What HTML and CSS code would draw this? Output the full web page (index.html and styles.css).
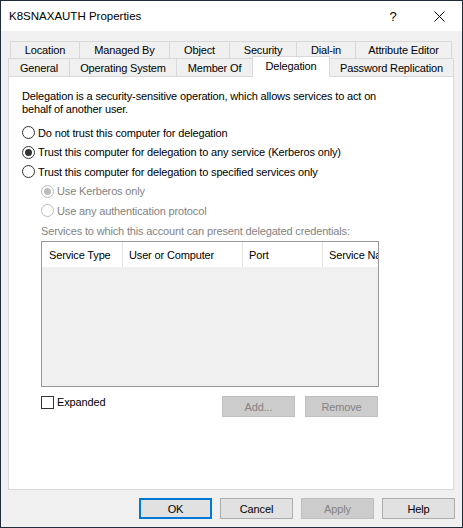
FILE: index.html
```html
<!DOCTYPE html>
<html lang="en">
<head>
<meta charset="utf-8">
<title>K8SNAXAUTH Properties</title>
<link rel="stylesheet" href="styles.css">
</head>
<body>
<div class="window">
  <div class="titlebar">
    <span class="title">K8SNAXAUTH Properties</span>
    <div class="caps">
      <div class="cap cap-help">?</div>
      <div class="cap cap-close">
        <svg width="11" height="11" viewBox="0 0 11 11"><path d="M0.5 0.5 L10.5 10.5 M10.5 0.5 L0.5 10.5" stroke="#000" stroke-width="1" fill="none"/></svg>
      </div>
    </div>
  </div>
  <div class="client">
    <div class="tabs">
      <div class="tab-row back">
        <div class="tab t-location">Location</div>
        <div class="tab t-managed">Managed By</div>
        <div class="tab t-object">Object</div>
        <div class="tab t-security">Security</div>
        <div class="tab t-dialin">Dial-in</div>
        <div class="tab t-attr last">Attribute Editor</div>
      </div>
      <div class="tab-row front">
        <div class="tab t-general">General</div>
        <div class="tab t-os">Operating System</div>
        <div class="tab t-member">Member Of</div>
        <div class="tab t-deleg selected">Delegation</div>
        <div class="tab t-pwd last">Password Replication</div>
      </div>
    </div>
    <div class="panel">
      <p class="desc">Delegation is a security-sensitive operation, which allows services to act on behalf of another user.</p>
      <div class="radios">
        <div class="radio-row"><span class="radio"></span><span>Do not trust this computer for delegation</span></div>
        <div class="radio-row"><span class="radio checked"></span><span>Trust this computer for delegation to any service (Kerberos only)</span></div>
        <div class="radio-row"><span class="radio"></span><span>Trust this computer for delegation to specified services only</span></div>
        <div class="radio-row sub"><span class="radio checked"></span><span>Use Kerberos only</span></div>
        <div class="radio-row sub"><span class="radio"></span><span>Use any authentication protocol</span></div>
      </div>
      <div class="services-label">Services to which this account can present delegated credentials:</div>
      <div class="list">
        <div class="list-header">
          <div class="col c1">Service Type</div>
          <div class="col c2">User or Computer</div>
          <div class="col c3">Port</div>
          <div class="col c4">Service Name</div>
        </div>
      </div>
      <div class="bottom-row">
        <label class="check"><span class="checkbox"></span><span>Expanded</span></label>
        <div class="side-buttons">
          <button class="btn disabled" type="button">Add...</button>
          <button class="btn disabled" type="button">Remove</button>
        </div>
      </div>
    </div>
    <div class="dialog-buttons">
      <button class="btn default" type="button">OK</button>
      <button class="btn" type="button">Cancel</button>
      <button class="btn disabled" type="button">Apply</button>
      <button class="btn" type="button">Help</button>
    </div>
  </div>
</div>
</body>
</html>
```

FILE: styles.css
```css
html, body {
  margin: 0;
  padding: 0;
}

body {
  font-family: "Liberation Sans", Arial, sans-serif;
  font-size: 11px;
  letter-spacing: -0.15px;
  color: #000;
  background: #f0f0f0;
}

.window {
  width: 463px;
  height: 528px;
  box-sizing: border-box;
  border: 1px solid #1f2b38;
  background: #f0f0f0;
  display: flex;
  flex-direction: column;
}

/* Title bar */
.titlebar {
  flex: none;
  height: 30px;
  background: #fff;
  display: flex;
  align-items: center;
}

.title {
  flex: 1;
  padding-left: 8px;
  font-size: 11.5px;
  letter-spacing: 0;
}

.caps {
  display: flex;
  height: 30px;
}

.cap {
  width: 46px;
  height: 30px;
  display: flex;
  align-items: center;
  justify-content: center;
}

.cap-help {
  font-size: 13px;
  letter-spacing: 0;
}

/* Client area */
.client {
  flex: 1;
  min-height: 0;
  display: flex;
  flex-direction: column;
  padding: 10px 8px 8px 7px;
}

.tabs {
  flex: none;
  display: flex;
  flex-direction: column;
}

.tab-row {
  display: flex;
}

.tab-row.back {
  height: 17px;
  margin-left: 2px;
}

.tab-row.front {
  height: 18px;
  align-items: flex-start;
}

.tab {
  box-sizing: border-box;
  height: 100%;
  border-top: 1px solid #d9d9d9;
  border-left: 1px solid #d9d9d9;
  background: #f0f0f0;
  display: flex;
  align-items: center;
  justify-content: center;
  white-space: nowrap;
  line-height: 13px;
}

.tab-row.front .tab {
  padding-top: 1px;
}

.tab.last {
  border-right: 1px solid #d9d9d9;
}

.tab-row.front .tab.selected {
  height: 21px;
  margin-top: -2px;
  margin-right: -1px;
  border-right: 1px solid #d9d9d9;
  background: #fff;
  align-items: flex-start;
  padding-top: 3px;
  position: relative;
  z-index: 1;
}

.t-location { width: 69px; }
.t-managed { width: 90px; }
.t-object { width: 60px; }
.t-security { width: 67px; }
.t-dialin { width: 59px; }
.t-attr { width: 97px; }

.t-general { width: 61px; }
.t-os { width: 107px; }
.t-member { width: 76px; }
.t-deleg { width: 78px; }
.t-pwd { width: 125px; }

/* Panel */
.panel {
  flex: 1;
  min-height: 0;
  box-sizing: border-box;
  background: #fff;
  border: 1px solid #d9d9d9;
  padding: 13px 13px 0 13px;
}

.desc {
  margin: 0;
  line-height: 13px;
  width: 360px;
}

.radios {
  margin-top: 7px;
}

.radio-row {
  height: 19.5px;
  display: flex;
  align-items: center;
  gap: 3px;
  white-space: nowrap;
}

.radio {
  flex: none;
  width: 13px;
  height: 13px;
  box-sizing: border-box;
  border: 1px solid #333;
  border-radius: 50%;
  background: #fff;
  display: flex;
  align-items: center;
  justify-content: center;
}

.radio.checked::after {
  content: "";
  width: 7px;
  height: 7px;
  border-radius: 50%;
  background: #333;
}

.radio-row.sub {
  padding-left: 19px;
  color: #838383;
}

.radio-row.sub .radio {
  border-color: #bcbcbc;
}

.radio-row.sub .radio.checked::after {
  background: #bcbcbc;
}

.services-label {
  margin: 4px 0 0 19px;
  line-height: 13px;
  color: #838383;
  white-space: nowrap;
}

.list {
  margin: 3.5px 0 0 19px;
  width: 338px;
  height: 146px;
  box-sizing: border-box;
  border: 1px solid #999;
  background: #f0f0f0;
  overflow: hidden;
}

.list-header {
  display: flex;
  height: 25px;
  background: #fff;
}

.col {
  box-sizing: border-box;
  height: 100%;
  padding-left: 6px;
  border-right: 1px solid #e5e5e5;
  display: flex;
  align-items: center;
  white-space: nowrap;
  overflow: hidden;
}

.c1 { width: 81px; padding-left: 7px; }
.c2 { width: 120px; }
.c3 { width: 80px; }
.c4 { flex: 1; border-right: none; }

.bottom-row {
  margin: 9px 0 0 19px;
  width: 338px;
  display: flex;
  justify-content: space-between;
  align-items: flex-start;
}

.check {
  display: flex;
  align-items: center;
  gap: 3px;
  line-height: 13px;
}

.checkbox {
  flex: none;
  width: 13px;
  height: 13px;
  box-sizing: border-box;
  border: 1px solid #333;
  background: #fff;
}

.side-buttons {
  display: flex;
  gap: 10px;
  margin-right: 1px;
}

/* Buttons */
.btn {
  margin: 0;
  padding: 0;
  width: 73px;
  height: 21px;
  box-sizing: border-box;
  border: 1px solid #adadad;
  background: #e1e1e1;
  font: inherit;
  letter-spacing: inherit;
  color: #000;
  display: flex;
  align-items: center;
  justify-content: center;
}

.btn.disabled {
  background: #cccccc;
  border-color: #bfbfbf;
  color: #838383;
}

.btn.default {
  border: 2px solid #0078d7;
}

.dialog-buttons {
  flex: none;
  display: flex;
  justify-content: flex-end;
  gap: 8px;
  margin-top: 8px;
  margin-right: -1px;
}
```
